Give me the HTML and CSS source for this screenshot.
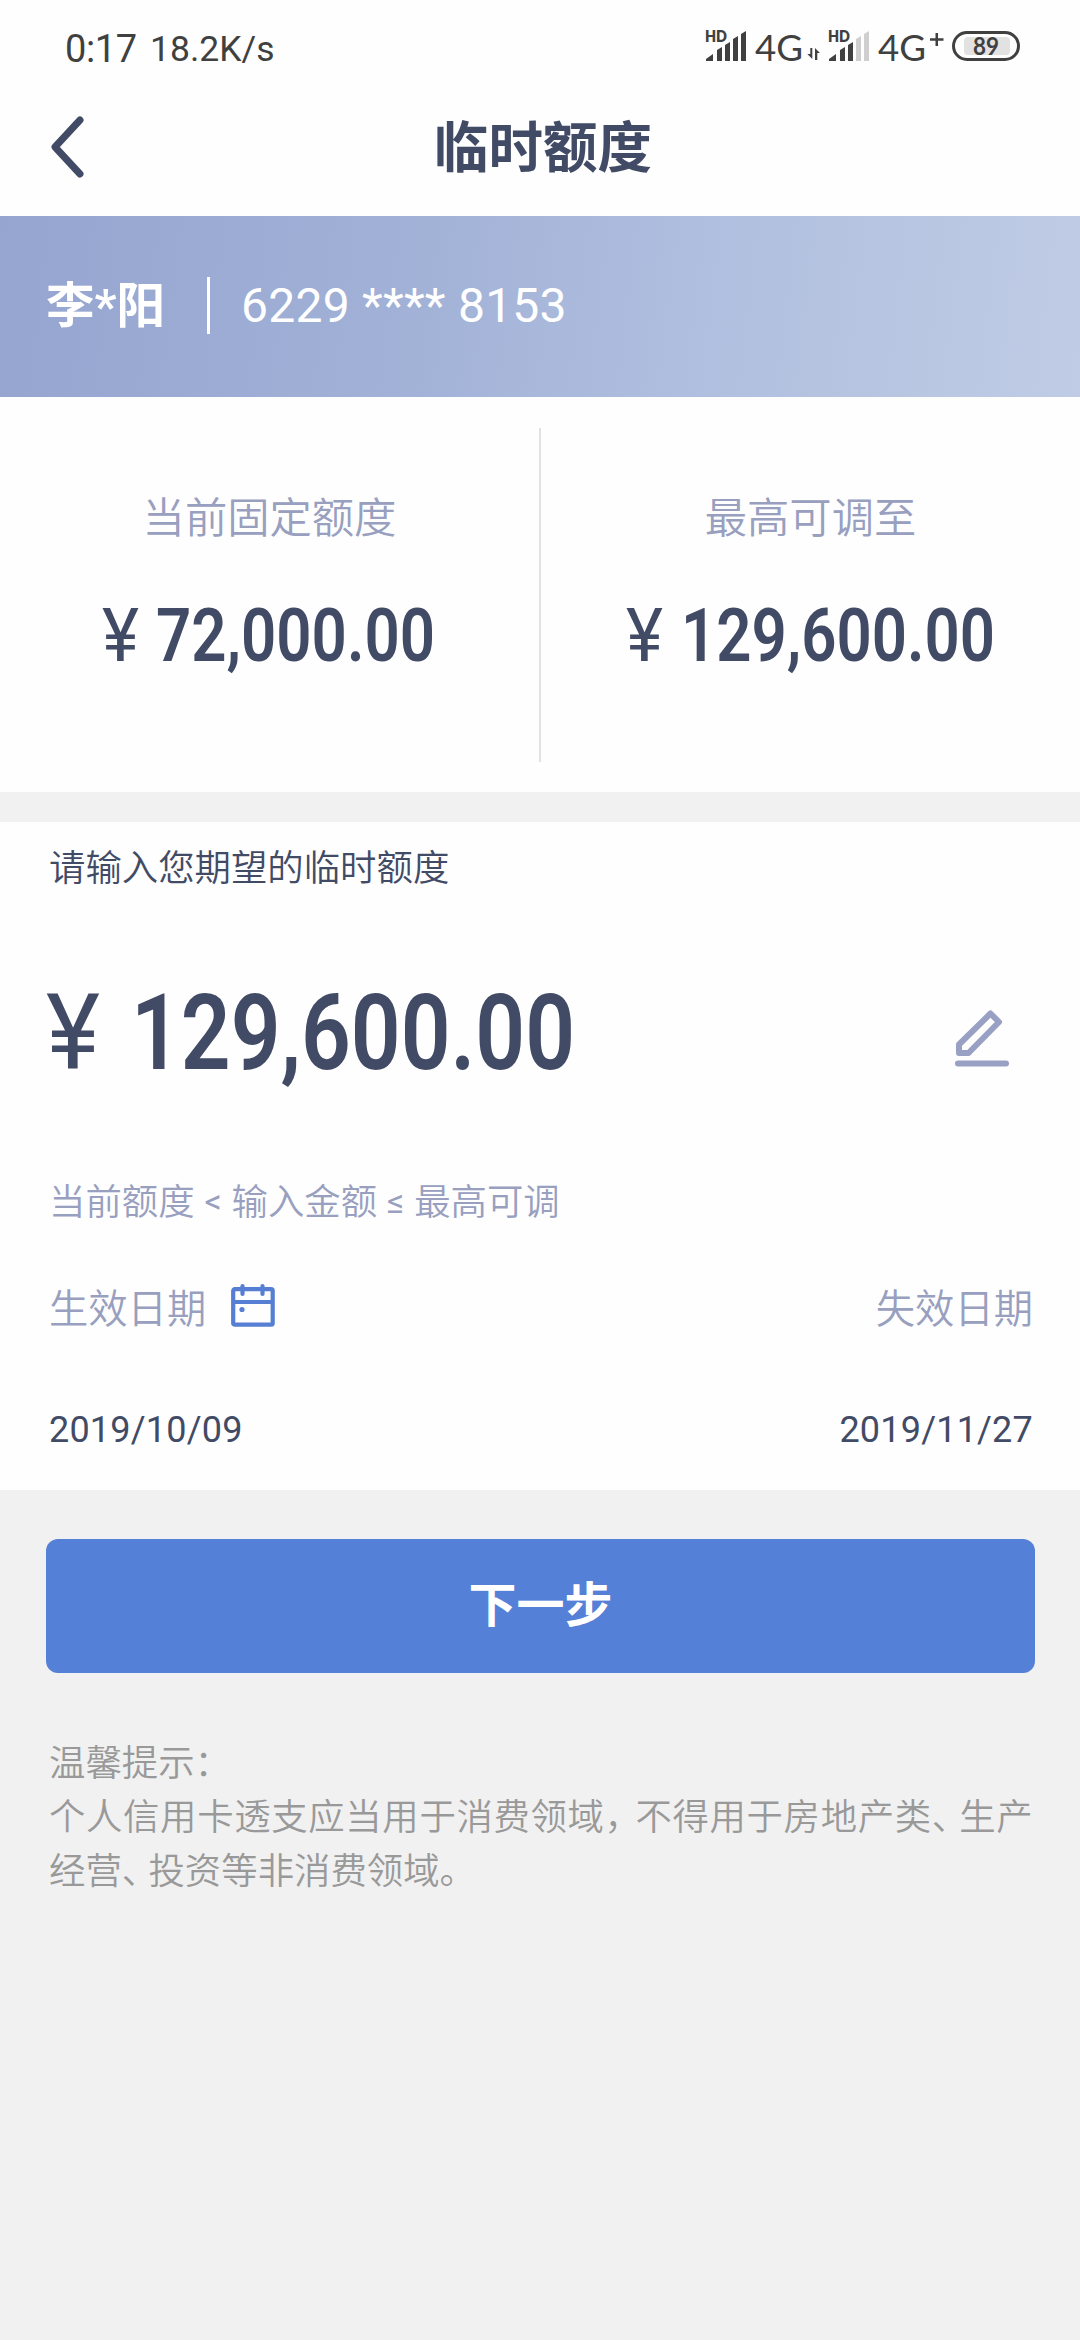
FILE: index.html
```html
<!DOCTYPE html>
<html lang="zh-CN">
<head>
<meta charset="utf-8">
<title>临时额度</title>
<link rel="stylesheet" href="styles.css">
</head>
<body>
<div class="screen">
  <div class="status">
    <span class="clock">0:17</span>
    <span class="speed">18.2K/s</span>
    <div class="indicators">
      <svg class="signal" width="42" height="32" viewBox="0 0 42 32">
        <text x="0" y="12" class="hd" textLength="22" lengthAdjust="spacingAndGlyphs">HD</text>
        <path d="M1 31v-2l7-5v7zM12 31V20l5-3v14zM20 31V15l5-3v19zM28 31V9l5-3v25zM36 31V4l5-3v30z"/>
      </svg>
      <svg class="net" width="65" height="32" viewBox="0 0 65 32">
        <text x="0" y="31" class="gen" textLength="48" lengthAdjust="spacingAndGlyphs">4G</text>
        <path d="M57.300 18v11l-5-5h3v-6zM60 30V18l5 5h-2.700v7z"/>
      </svg>
      <svg class="signal" width="42" height="32" viewBox="0 0 42 32">
        <text x="0" y="12" class="hd" textLength="22" lengthAdjust="spacingAndGlyphs">HD</text>
        <path d="M1 31v-2l7-5v7zM12 31V20l5-3v14zM20 31V15l5-3v19z"/>
        <path class="off" d="M28 31V9l5-3v25zM36 31V4l5-3v30z"/>
      </svg>
      <svg class="net" width="66" height="32" viewBox="0 0 66 32">
        <text x="0" y="31" class="gen" textLength="48" lengthAdjust="spacingAndGlyphs">4G</text>
        <path d="M57.500 3h2.500v5.300h5.500v2.500H60V16h-2.500v-5.200H52V8.300h5.500z"/>
      </svg>
      <svg class="battery" width="68" height="32" viewBox="0 0 68 32">
        <rect x="1.500" y="2.500" width="65" height="27" rx="13.500" fill="none" stroke="#404040" stroke-width="3"/>
        <rect x="12" y="7" width="46" height="18" rx="4" fill="#e2e2e2"/>
        <text x="21" y="25" class="level" textLength="26" lengthAdjust="spacingAndGlyphs">89</text>
      </svg>
    </div>
  </div>

  <header class="nav">
    <svg class="back" width="36" height="62" viewBox="0 0 36 62"><path d="M30 4 5 31 30 58"/></svg>
    <h1 class="title">临时额度</h1>
  </header>

  <section class="holder">
    <span class="name">李*阳</span>
    <span class="bar"></span>
    <span class="card-no">6229 **** 8153</span>
  </section>

  <section class="limits">
    <div class="limit">
      <div class="label">当前固定额度</div>
      <svg class="amount first" width="334" height="86" viewBox="0 0 334 86">
        <text x="0" y="66" class="yen" textLength="37" lengthAdjust="spacingAndGlyphs">¥</text>
        <text x="54" y="66" textLength="279" lengthAdjust="spacingAndGlyphs">72,000.00</text>
      </svg>
    </div>
    <div class="rule"></div>
    <div class="limit">
      <div class="label">最高可调至</div>
      <svg class="amount" width="370" height="86" viewBox="0 0 370 86">
        <text x="0" y="66" class="yen" textLength="37" lengthAdjust="spacingAndGlyphs">¥</text>
        <text x="55" y="66" textLength="314" lengthAdjust="spacingAndGlyphs">129,600.00</text>
      </svg>
    </div>
  </section>

  <section class="form">
    <div class="prompt">请输入您期望的临时额度</div>
    <div class="entry">
      <svg class="amount big" width="530" height="120" viewBox="0 0 530 120">
        <text x="0" y="93" class="yen" textLength="54" lengthAdjust="spacingAndGlyphs">¥</text>
        <text x="85" y="93" textLength="444" lengthAdjust="spacingAndGlyphs">129,600.00</text>
      </svg>
      <svg class="pencil" width="54" height="58" viewBox="0 0 54 58">
        <path d="M4 43V34.500L35.500 3.500 44 12 13.500 43z" fill="none" stroke="#98a0c3" stroke-width="6" stroke-linejoin="round"/>
        <path d="M3 53.500h48" stroke="#98a0c3" stroke-width="6" stroke-linecap="round"/>
      </svg>
    </div>
    <div class="hint">当前额度<span class="op">&lt;</span>输入金额<span class="op">≤</span>最高可调</div>
    <div class="dates heads">
      <span class="start">生效日期
        <svg class="calendar" width="44" height="44" viewBox="0 0 44 44"><rect x="2.200" y="6.200" width="39.500" height="35.500" rx="1.500"/><path d="M2 19h40"/><path class="ring" d="M11.500 3v8M31.500 3v8"/><circle cx="11" cy="26.500" r="2.600"/></svg>
      </span>
      <span>失效日期</span>
    </div>
    <div class="dates values"><span>2019/10/09</span><span>2019/11/27</span></div>
  </section>

  <button class="next">下一步</button>

  <div class="notes">
    <div>温馨提示<span class="half">：</span></div>
    <div class="full">个人信用卡透支应当用于消费领域<span class="half comma">，</span>不得用于房地产类<span class="half">、</span>生产</div>
    <div>经营<span class="half">、</span>投资等非消费领域。</div>
  </div>
</div>
</body>
</html>
```

FILE: styles.css
```css
* { box-sizing: border-box; }
body {
  margin: 0;
  background: #f1f1f1;
  color: #424b66;
  font-family: Roboto, "Noto Sans CJK SC", sans-serif;
}
svg { overflow: visible; }
.screen { width: 1080px; height: 2340px; overflow: hidden; }

.status {
  display: flex;
  height: 96px;
  padding: 0 60px 0 65px;
  background: #fefefe;
  color: #404040;
  line-height: 98px;
  white-space: nowrap;
}
.clock { width: 85px; font-size: 38px; font-weight: 400; letter-spacing: -.4px; }
.speed { font-size: 35.500px; font-weight: 375; }
.indicators { display: flex; margin: 30px 0 0 auto; height: 32px; fill: #404040; }
.signal, .net { margin-right: 8px; }
.hd { font: 800 16px Lato, sans-serif; }
.gen { font: 400 36px Lato, sans-serif; }
.level { font: 700 24px Lato, sans-serif; }
.off { fill: #cfcfcf; }

.nav {
  display: flex;
  align-items: center;
  justify-content: center;
  position: relative;
  height: 120px;
  background: #fefefe;
}
.back { position: absolute; left: 50px; top: 20px; fill: none; stroke: #424b66; stroke-width: 7; stroke-linecap: round; stroke-linejoin: round; }
.title { margin: 0 0 16px 6px; font-size: 54.500px; line-height: 80px; font-weight: 700; }

.holder {
  display: flex;
  align-items: center;
  height: 181px;
  padding: 0 46px 3px;
  background: linear-gradient(97deg, #96a5d0 0%, #a0b0d6 35%, #b0bfdf 65%, #c0cce5 100%);
  color: #fff;
  font-size: 48px;
}
.name { width: 161px; margin-bottom: 6px; font-size: 48.500px; font-weight: 700; }
.bar { width: 3px; height: 57px; background: #fff; }
.card-no { margin-left: 31px; white-space: nowrap; letter-spacing: .25px; }

.limits { display: flex; height: 395px; background: #fefefe; }
.limit {
  display: flex;
  flex: 1;
  flex-direction: column;
  align-items: center;
  padding-top: 91px;
}
.label { color: #989fbf; font-size: 42.300px; line-height: 62px; font-weight: 350; }
.rule { width: 2px; height: 334px; margin-top: 31px; background: #e2e2e5; }
.amount { margin-top: 45px; fill: #424b66; font: 600 74.500px Roboto, sans-serif; }
.first { margin-right: 2px; }
.amount .yen { font-weight: 400; }

.form { height: 668px; margin-top: 30px; padding: 0 47px 0 49px; background: #fefefe; }
.prompt { padding-top: 19px; font-size: 36.400px; line-height: 56px; font-weight: 350; }
.entry { display: flex; height: 208px; padding-right: 24px; justify-content: space-between; }
.big { margin: 79px 0 0 -3px; font-size: 105px; }
.pencil { margin-top: 113px; }
.hint { margin-top: 70px; height: 56px; color: #989fbf; font-size: 36.400px; line-height: 56px; font-weight: 350; }
.op { display: inline-block; width: 37px; text-align: center; font-size: 34px; font-weight: 400; line-height: 40px; vertical-align: 2px; }
.dates { display: flex; justify-content: space-between; }
.heads { margin-top: 49px; height: 60px; color: #989fbf; font-size: 39.300px; line-height: 60px; font-weight: 350; }
.start { display: flex; }
.calendar { margin: 3px 0 0 25px; fill: none; stroke: #567fd4; stroke-width: 4.200; }
.calendar .ring { stroke-linecap: round; }
.calendar circle { fill: #567fd4; stroke: none; }
.values { margin-top: 60px; font-size: 36px; line-height: 60px; letter-spacing: .2px; }

.next {
  display: block;
  width: 989px;
  height: 134px;
  margin: 49px 0 0 46px;
  padding: 0 0 10px;
  border: 0;
  border-radius: 12px;
  background: #5580d7;
  color: #fff;
  font: 700 48px "Noto Sans CJK SC", sans-serif;
}
.notes { padding: 64px 0 0 49px; color: #999; font-size: 36.400px; line-height: 54px; font-weight: 350; white-space: nowrap; }
.full { letter-spacing: .65px; }
.half { margin-right: 8.500px; font-feature-settings: "halt"; }
.comma { margin-right: 12px; }
```
